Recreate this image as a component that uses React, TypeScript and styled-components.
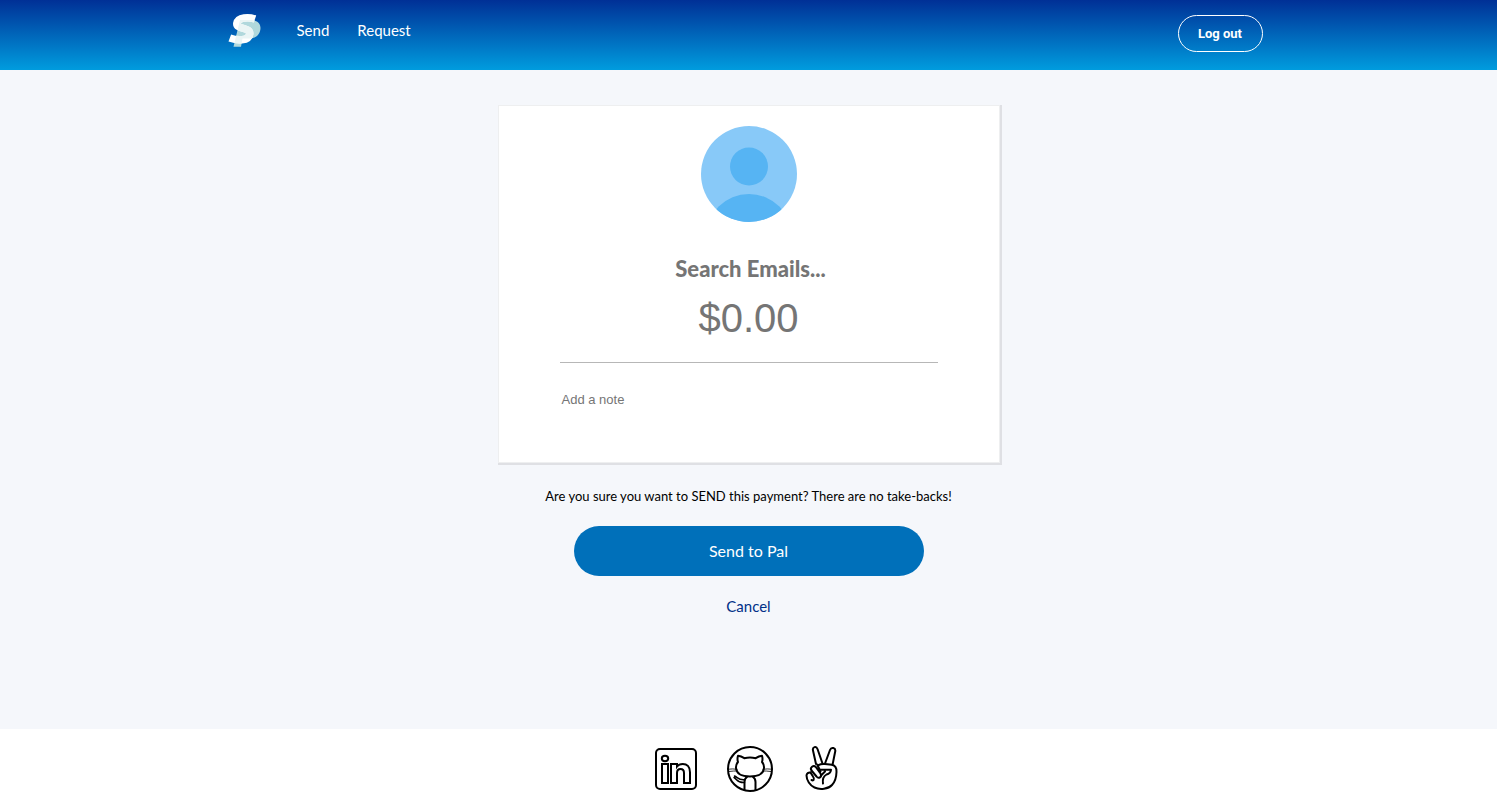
import React from "react";
import styled, { createGlobalStyle } from "styled-components";

const GlobalStyle = createGlobalStyle`
  *, *::before, *::after { box-sizing: border-box; }
  body {
    margin: 0;
    background: #ffffff;
    color: #000000;
    font-family: Lato, "Open Sans", sans-serif;
  }
`;

const Page = styled.div`
  display: flex;
  flex-direction: column;
  min-height: 100vh;
`;

const Header = styled.header`
  height: 70px;
  background: linear-gradient(#003096, #009cde);
`;

const HeaderInner = styled.div`
  display: flex;
  align-items: flex-start;
  max-width: 1042px;
  margin: 0 auto;
  padding-right: 7px;
`;

const LogoLink = styled.a`
  display: block;
  height: 36px;
  margin: 13px 33px 0 0;
`;

const Nav = styled.nav`
  display: flex;
  gap: 28px;
  margin: 20px auto 0 0;
`;

const NavLink = styled.a`
  color: #ffffff;
  font-size: 15px;
  line-height: 20px;
  text-decoration: none;
`;

const LogoutButton = styled.button`
  width: 85px;
  height: 37px;
  margin-top: 15px;
  padding: 0;
  border: 1px solid #ffffff;
  border-radius: 20px;
  background: transparent;
  color: #ffffff;
  font: bold 13px Roboto, "Liberation Sans", sans-serif;
  cursor: pointer;
`;

const Main = styled.main`
  flex: 1;
  background: #f5f7fb;
  padding: 35px 16px;
`;

const PaymentForm = styled.form`
  display: flex;
  flex-direction: column;
  align-items: center;
`;

const Card = styled.section`
  display: flex;
  flex-direction: column;
  align-items: center;
  width: 100%;
  max-width: 502px;
  padding: 20px 61px 28px;
  border: 1px solid #eeeff0;
  background: #ffffff;
  box-shadow: 1px 1px 0 1px #dfe0e4;
`;

const EmailInput = styled.input`
  width: 100%;
  height: 40px;
  margin-top: 26px;
  padding: 0 0 0 4px;
  border: 0;
  outline: 0;
  background: transparent;
  font: 900 22px Lato, sans-serif;
  text-align: center;
  &::placeholder { color: #757575; opacity: 1; }
`;

const AmountInput = styled.input`
  width: 100%;
  height: 50px;
  margin-top: 5px;
  padding: 0;
  border: 0;
  outline: 0;
  background: transparent;
  font: 40px "Liberation Sans", sans-serif;
  text-align: center;
  &::placeholder { color: #757575; opacity: 1; }
`;

const Divider = styled.hr`
  width: 100%;
  height: 1px;
  margin: 19px 0 27px;
  border: 0;
  background: #b7b7b7;
`;

const NoteInput = styled.textarea`
  width: 100%;
  height: 44px;
  padding: 2px;
  border: 0;
  outline: 0;
  resize: none;
  background: transparent;
  font: 13px/16px "Liberation Sans", sans-serif;
  &::placeholder { color: #757575; opacity: 1; }
`;

const Warning = styled.p`
  margin: 23px 0 20px;
  font-size: 13px;
  line-height: 20px;
`;

const SubmitButton = styled.button`
  width: 100%;
  max-width: 350px;
  height: 50px;
  padding: 0 0 2px;
  border: 0;
  border-radius: 25px;
  background: #0070ba;
  color: #ffffff;
  font: 16px Lato, sans-serif;
  cursor: pointer;
`;

const CancelLink = styled.a`
  margin-top: 20px;
  color: #003087;
  font-size: 15px;
  line-height: 20px;
  text-decoration: none;
`;

const Footer = styled.footer`
  display: flex;
  justify-content: center;
  gap: 23px;
  padding: 15px 0 18px;
`;

const SocialLink = styled.a`
  display: block;
  height: 50px;
  color: #000000;
`;

const OutlineIcon = styled.svg.attrs({ viewBox: "0 0 50 50", width: 50, height: 50, "aria-hidden": true })`
  display: block;
  fill: none;
  stroke: currentColor;
  stroke-width: 2px;
  stroke-linecap: round;
  stroke-linejoin: round;
`;

const backShape = "M12 7H22C29 7 32.500 10 32.500 15C32.300 21.500 28 25.500 21 25.500H14.500L13 33.700H5.500z";
const frontCurve = "M27 6C21 4 10 3.800 8.800 10.500C8.200 16.500 22.500 14 21.700 21C20.800 28.500 8.500 27.500 1.800 25";

function Logo() {
  return (
    <svg width="36" height="36" viewBox="0 0 36 36" aria-hidden="true">
      <clipPath id="logo-overlap">
        <path d={backShape} />
      </clipPath>
      <path d={backShape} fill="#b0d8dc" />
      <path d={frontCurve} fill="none" stroke="#ffffff" strokeWidth="7.500" />
      <path d={frontCurve} fill="none" stroke="#eaf5f5" strokeWidth="7.500" clipPath="url(#logo-overlap)" />
    </svg>
  );
}

function Avatar() {
  return (
    <svg width="96" height="96" viewBox="0 0 96 96" aria-hidden="true">
      <clipPath id="avatar-clip">
        <circle cx="48" cy="48" r="48" />
      </clipPath>
      <circle cx="48" cy="48" r="48" fill="#88c9f8" />
      <circle cx="48" cy="40.500" r="19" fill="#56b4f3" />
      <circle cx="48" cy="111" r="43" fill="#56b4f3" clipPath="url(#avatar-clip)" />
    </svg>
  );
}

function LinkedInIcon() {
  return (
    <OutlineIcon>
      <rect x="5" y="5" width="40" height="40" rx="4" />
      <g strokeLinejoin="miter">
        <path d="M11 20h6v19h-6z" />
        <ellipse cx="14" cy="14.500" rx="3.200" ry="2.700" />
        <path d="M39 39h-6V29c0-2-1-4-3.500-4S26 27 26 29v10h-6V20h6v2.500S27.900 20 31.800 20C35.800 20 39 22.700 39 28.300z" />
      </g>
    </OutlineIcon>
  );
}

function GitHubIcon() {
  return (
    <OutlineIcon>
      <circle cx="26" cy="25" r="22" />
      <path d="M14 11.700C16.500 12 18.500 13 20.300 14.200Q26 12.800 31.700 14.200C33.500 13 35.500 12 38 11.700Q39 15 38 18Q40.300 20.500 40 24C39.500 30.500 34 32.500 26 32.500S12.500 30.500 12 24Q11.700 20.500 14 18Q13 15 14 11.700z" />
      <path d="M23 33Q20.500 34.500 20.500 38V46M29 33Q31.500 34.500 31.500 38V46" />
      <path d="M10.500 32C13.500 33 14.500 36.500 20.500 35.800M10 33.500C13 35 13 39 20.500 38.500" strokeWidth="1.500" />
      <path d="M4 25.200Q9 24.500 13 25.300M5 27.500Q10 26.800 13.500 27M48 25.200Q43 24.500 39 25.300M47 27.500Q42 26.800 38.500 27" strokeWidth="0.800" />
    </OutlineIcon>
  );
}

function PeaceIcon() {
  return (
    <OutlineIcon>
      <path d="M19 20L16 6.500C15.200 3 19.200 1.500 20.500 5L25.500 19.500" />
      <path d="M28 19.500L33 6C34.300 2.500 39 3.800 38.200 7.500L35.500 21" />
      <path d="M21.500 21.200Q24 19.500 28 20L35 20.800C38.300 21.500 39.700 24 39.500 28C39.300 34 38 38 35 41C31.500 45 23 46 17.500 43.500C13 41.500 9.500 36 9.500 31.500C9.500 29.500 11.500 28.200 13.500 28.500" />
      <path d="M20.200 20.500L23.500 27.500M14.500 26.500C12.500 23.500 16.500 20.500 18.800 23L23.500 29.500C25.500 33 21.500 35.200 19.500 32.500z" />
      <path d="M13.500 28.500L16 32.500C18 35.500 16.500 37 14.500 36" />
      <path d="M23.500 25.800H34Q33.500 29.500 29.500 30.500Q25 33 26 39.500M24 31.500L28 27.500" />
    </OutlineIcon>
  );
}

export default function App() {
  return (
    <>
      <GlobalStyle />
      <Page>
        <Header>
          <HeaderInner>
            <LogoLink href="#home" aria-label="Home">
              <Logo />
            </LogoLink>
            <Nav>
              <NavLink href="#send">Send</NavLink>
              <NavLink href="#request">Request</NavLink>
            </Nav>
            <LogoutButton type="button">Log out</LogoutButton>
          </HeaderInner>
        </Header>
        <Main>
          <PaymentForm onSubmit={(event) => event.preventDefault()}>
            <Card>
              <Avatar />
              <EmailInput type="text" aria-label="Recipient email" placeholder="Search Emails..." />
              <AmountInput type="text" inputMode="decimal" aria-label="Amount" placeholder="$0.00" />
              <Divider />
              <NoteInput aria-label="Note" placeholder="Add a note" />
            </Card>
            <Warning>Are you sure you want to SEND this payment? There are no take-backs!</Warning>
            <SubmitButton type="submit">Send to Pal</SubmitButton>
            <CancelLink href="#cancel">Cancel</CancelLink>
          </PaymentForm>
        </Main>
        <Footer>
          <SocialLink href="#linkedin" aria-label="LinkedIn">
            <LinkedInIcon />
          </SocialLink>
          <SocialLink href="#github" aria-label="GitHub">
            <GitHubIcon />
          </SocialLink>
          <SocialLink href="#portfolio" aria-label="Portfolio">
            <PeaceIcon />
          </SocialLink>
        </Footer>
      </Page>
    </>
  );
}
